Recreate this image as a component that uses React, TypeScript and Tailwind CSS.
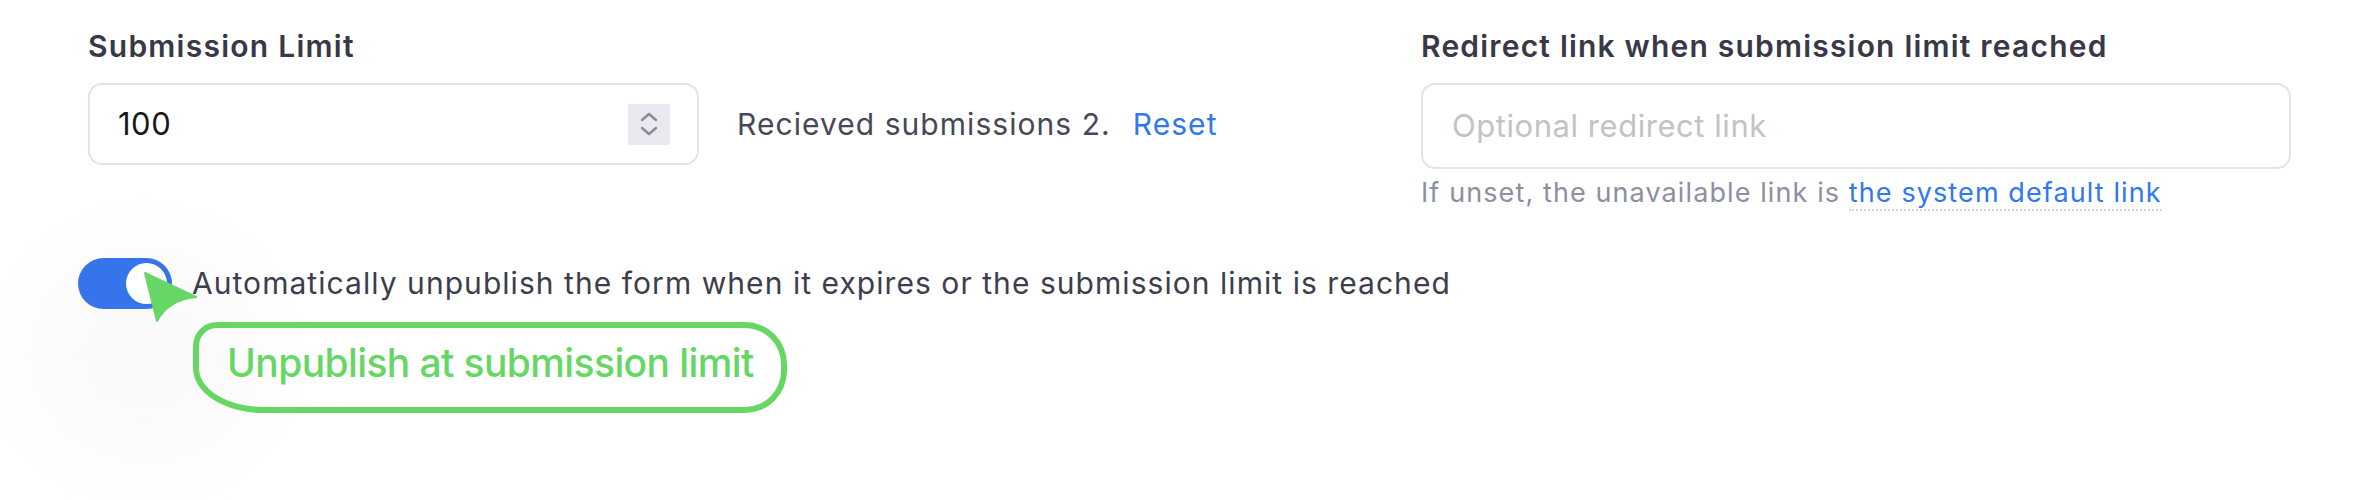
export default function App() {
  return (
    <div className="relative h-[500px] w-[2373px] overflow-hidden bg-white font-['Inter',sans-serif]">
      {/* faint glow behind the toggle */}
      <div className="absolute left-[30px] top-[250px] h-[210px] w-[230px] rounded-full bg-[#f4f4f6] opacity-50 blur-2xl" />

      <div className="relative flex pl-[88px] pt-[24px]">
        <div className="w-[1333px]">
          <label className="block text-[30px] font-semibold leading-[45px] tracking-[1.25px] text-[#383847]">
            Submission Limit
          </label>
          <div className="mt-[14px] flex items-center">
            <div className="flex h-[82px] w-[611px] items-center justify-between rounded-[14px] border-2 border-[#e3e4ea] pl-[28px] pr-[27px]">
              <span className="text-[31px] tracking-[0.5px] text-[#18181b]">100</span>
              <div className="flex h-[41px] w-[42px] items-center justify-center bg-[#e9e9ef]">
                <svg width="22" height="32" viewBox="0 0 22 32" fill="none" stroke="#8b8b96" strokeWidth="2.5" strokeLinecap="round" strokeLinejoin="round">
                  <path d="M4 12 L11 6 L18 12" />
                  <path d="M4 20 L11 26 L18 20" />
                </svg>
              </div>
            </div>
            <span className="ml-[38px] text-[30px] tracking-[1.05px] text-[#474757]">Recieved submissions 2.</span>
            <button className="ml-[22px] text-[30px] tracking-[1.05px] text-[#2f78f0]">Reset</button>
          </div>
        </div>

        <div className="w-[870px]">
          <label className="block text-[30px] font-semibold leading-[45px] tracking-[1.2px] text-[#383847]">
            Redirect link when submission limit reached
          </label>
          <div className="mt-[14px] flex h-[86px] items-center rounded-[14px] border-2 border-[#e3e4ea] pl-[29px]">
            <span className="text-[31px] tracking-[0.55px] text-[#c2c2ca]">Optional redirect link</span>
          </div>
          <p className="mt-[4px] text-[27px] leading-[40px] tracking-[1.1px] text-[#8d8fa0]">
            If unset, the unavailable link is{' '}
            <a className="border-b-2 border-dotted border-[#d4d5dc] text-[#2f78f0]">the system default link</a>
          </p>
        </div>
      </div>

      <div className="relative mt-[45px] flex items-center pl-[78px]">
        <div className="flex h-[51px] w-[94px] items-center justify-end rounded-full bg-[#3574ea] pr-[5px]">
          <div className="h-[41px] w-[41px] rounded-full bg-white" />
        </div>
        <span className="ml-[20px] text-[30px] tracking-[1.05px] text-[#3d3d4e]">
          Automatically unpublish the form when it expires or the submission limit is reached
        </span>
      </div>

      <div className="relative ml-[193px] mt-[13px] flex h-[91px] w-[594px] items-center rounded-tl-[24px] rounded-bl-[70px_45px] rounded-r-[42px] border-[6px] border-[#66d764] pb-[8px] pl-[28px]">
        <span className="text-[39px] font-medium tracking-[-0.6px] text-[#66d764]">Unpublish at submission limit</span>
      </div>

      {/* cursor */}
      <svg className="absolute left-0 top-0" width="260" height="340" viewBox="0 0 260 340">
        <path d="M145 273 L196 297 Q168 300 157 321 Z" fill="#66d764" stroke="#66d764" strokeWidth="2" strokeLinejoin="round" />
      </svg>
    </div>
  )
}
